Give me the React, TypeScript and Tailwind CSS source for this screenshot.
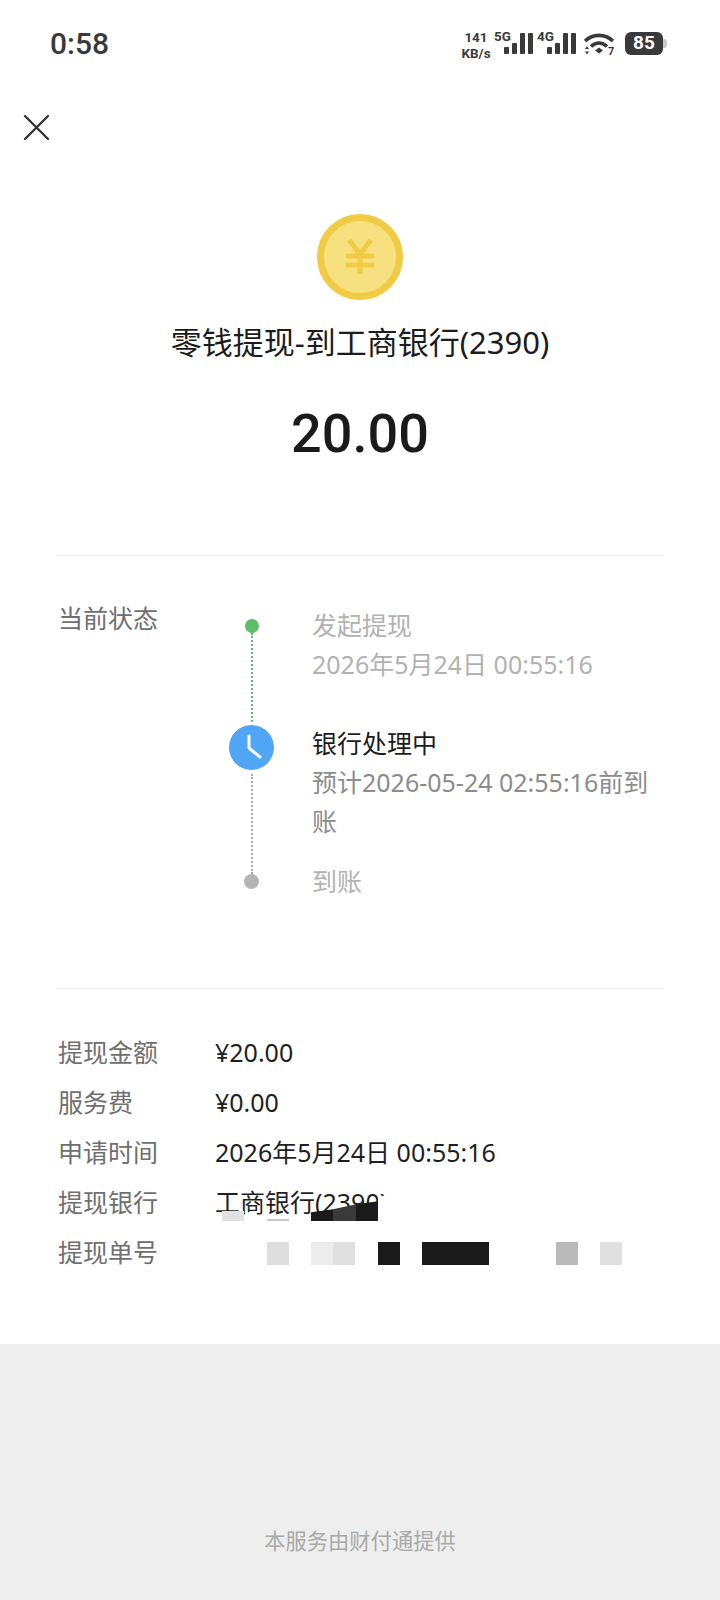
const cjk = { fontFamily: '"Noto Sans", "Noto Sans CJK SC", sans-serif' }

function SignalBars({ label }: { label: string }) {
  return (
    <div className="relative h-[24px] w-[39px]">
      <span className="absolute left-0 top-[-3px] text-[13.5px] leading-[14px] font-bold text-[#3a3a3a]">{label}</span>
      <svg className="absolute left-[10px] top-0" width="29" height="24" viewBox="0 0 29 24" fill="#3a3a3a">
        <rect x="0" y="15" width="5" height="7" rx="1" />
        <rect x="8" y="11" width="5" height="11" rx="1" />
        <rect x="16" y="1" width="5" height="21" rx="1" />
        <rect x="24" y="1" width="5" height="21" rx="1" />
      </svg>
    </div>
  )
}

function WifiIcon() {
  return (
    <svg width="32" height="28" viewBox="0 0 32 28" fill="none">
      <path d="M2 9C10 1.5 22 1.5 30 9" stroke="#3a3a3a" strokeWidth="3.6" />
      <path d="M8 14.5C13 10 19 10 24 14.5" stroke="#3a3a3a" strokeWidth="3.6" />
      <path d="M12 18.5L16 15.5L20 18.5L16 21.5Z" fill="#3a3a3a" />
      <path d="M2 17L4 14L6 17ZM2 19.5L4 22.5L6 19.5Z" fill="#3a3a3a" />
      <text x="25" y="23" fontSize="11" fontWeight="700" fill="#3a3a3a" fontFamily="Roboto, sans-serif">7</text>
    </svg>
  )
}

function StatusBar() {
  return (
    <div className="flex h-[88px] items-start justify-between pl-[50px] pr-[53px] pt-[26px] text-[#3a3a3a]">
      <span className="text-[30px] leading-[36px] font-medium" style={{ fontFamily: 'Roboto, sans-serif' }}>0:58</span>
      <div className="flex items-start pt-[6px]" style={{ fontFamily: 'Roboto, sans-serif' }}>
        <div className="mr-[1px] mt-[-3px] flex w-[34px] flex-col items-center text-[13.5px] leading-[16px] font-bold">
          <span>141</span>
          <span>KB/s</span>
        </div>
        <SignalBars label="5G" />
        <div className="w-[4px]" />
        <SignalBars label="4G" />
        <div className="ml-[7px]">
          <WifiIcon />
        </div>
        <div className="ml-[10px] flex items-center">
          <div className="flex h-[23px] w-[38px] items-center justify-center rounded-[6px] bg-[#3a3a3a] text-[19px] font-bold text-white">85</div>
          <div className="h-[9px] w-[4px] rounded-r-[3px] bg-[#c9c9c9]" />
        </div>
      </div>
    </div>
  )
}

function CloseIcon() {
  return (
    <svg width="28" height="28" viewBox="0 0 28 28" fill="none" stroke="#333" strokeWidth="2.4" strokeLinecap="round">
      <path d="M3 3L26 26M26 3L3 26" />
    </svg>
  )
}

function CoinIcon() {
  return (
    <div className="flex h-[86px] w-[86px] items-center justify-center rounded-full border-[7px] border-[#f2cb44] bg-[#f6e080]">
      <svg width="30" height="36" viewBox="0 0 30 36" fill="none" stroke="#f2cb44" strokeWidth="5">
        <path d="M4 1L15 15L26 1M15 15V35M1 17H29M1 26H29" />
      </svg>
    </div>
  )
}

function Timeline() {
  return (
    <div className="flex pl-[58px]">
      <div className="w-[171px] text-[25px] leading-[39px] text-[#6f6f6f]">当前状态</div>
      <div className="flex w-[45px] flex-col items-center pt-[20px]">
        <div className="h-[14px] w-[14px] rounded-full bg-[#5ebd6b]" />
        <div className="h-[89px] border-l-2 border-dotted border-[#5ebd6b]" />
        <div className="mt-[3px] flex h-[45px] w-[45px] items-center justify-center rounded-full bg-[#4fa6f5]">
          <svg width="24" height="30" viewBox="0 0 24 30" fill="none" stroke="#fff" strokeWidth="3">
            <path d="M9 3V15L20 24" strokeLinecap="round" strokeLinejoin="round" />
          </svg>
        </div>
        <div className="mt-[4px] h-[100px] border-l-2 border-dotted border-[#a8a8a8]" />
        <div className="h-[15px] w-[15px] rounded-full bg-[#b4b4b4]" />
      </div>
      <div className="ml-[38px] w-[350px] pt-[7px] text-[25px] leading-[39px] text-[#b2b2b2]">
        <div>发起提现</div>
        <div>2026年5月24日 00:55:16</div>
        <div className="mt-[40px] text-[#1c1c1c]">银行处理中</div>
        <div className="text-[#8c8c8c]">预计2026-05-24 02:55:16前到账</div>
        <div className="mt-[21px]">到账</div>
      </div>
    </div>
  )
}

function DetailRow({ label, children }: { label: string; children: React.ReactNode }) {
  return (
    <div className="flex h-[50px] items-center">
      <div className="w-[157px] text-[25px] text-[#6f6f6f]">{label}</div>
      <div className="relative flex-1 text-[25px] text-[#1f1f1f]">{children}</div>
    </div>
  )
}

export default function App() {
  return (
    <div className="flex h-[1600px] w-[720px] flex-col bg-white" style={cjk}>
      <StatusBar />
      <div className="pl-[22px] pt-[25px]">
        <CloseIcon />
      </div>
      <div className="mt-[73px] flex flex-col items-center">
        <CoinIcon />
        <div className="mt-[20px] text-[31px] leading-[44px] text-[#1c1c1c]">零钱提现-到工商银行(2390)</div>
        <div className="mt-[34px] text-[54px] leading-[72px] font-medium text-[#1a1a1a]" style={{ fontFamily: 'Roboto, sans-serif' }}>20.00</div>
      </div>
      <div className="mx-[58px] mt-[85px] h-px bg-[#ececec]" />
      <div className="mt-[43px]">
        <Timeline />
      </div>
      <div className="mx-[58px] mt-[87px] h-px bg-[#ececec]" />
      <div className="mt-[39px] pl-[58px]">
        <DetailRow label="提现金额">¥20.00</DetailRow>
        <DetailRow label="服务费">¥0.00</DetailRow>
        <DetailRow label="申请时间">2026年5月24日 00:55:16</DetailRow>
        <DetailRow label="提现银行">
          工商银行(2390)
          {/* mosaic over the account text */}
          <div className="absolute left-[-215px] top-0 h-0 w-0">
            <div className="absolute left-[378px] top-[12px] h-[30px] w-[18px] bg-white" />
            <div className="absolute left-[222px] top-[27px] h-[10px] w-[22px] bg-[#e2e2e2]" />
            <div className="absolute left-[267px] top-[35px] h-[2px] w-[22px] bg-[#c8c8c8]" />
            <div className="absolute left-[311px] top-[17px] flex h-[20px] w-[67px]">
              <div className="h-full w-[22px] bg-[#1a1a1a] [clip-path:polygon(0_55%,100%_40%,100%_100%,0_100%)]" />
              <div className="h-full w-[23px] bg-[#3a3a3a] [clip-path:polygon(0_40%,100%_15%,100%_100%,0_100%)]" />
              <div className="h-full w-[22px] bg-[#1a1a1a] [clip-path:polygon(0_15%,100%_0,100%_100%,0_100%)]" />
            </div>
          </div>
        </DetailRow>
        <DetailRow label="提现单号">
          <div className="flex h-[23px] pl-[52px]">
            <div className="h-full w-[22px] bg-[#dedede]" />
            <div className="ml-[22px] h-full w-[22px] bg-[#ececec]" />
            <div className="h-full w-[22px] bg-[#e0e0e0]" />
            <div className="ml-[23px] h-full w-[22px] bg-[#1a1a1a]" />
            <div className="ml-[22px] h-full w-[67px] bg-[#1a1a1a]" />
            <div className="ml-[67px] h-full w-[22px] bg-[#bababa]" />
            <div className="ml-[22px] h-full w-[22px] bg-[#e0e0e0]" />
          </div>
        </DetailRow>
      </div>
      <div className="mt-[66px] flex flex-1 justify-center bg-[#eeeeee] pt-[182px]">
        <span className="text-[21.3px] leading-[30px] text-[#a9a9a9]">本服务由财付通提供</span>
      </div>
    </div>
  )
}
